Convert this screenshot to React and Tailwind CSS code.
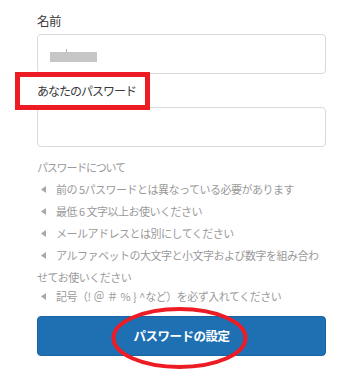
import React from "react";

const Bullet = () => (
  <svg width="5" height="7" viewBox="0 0 5 7" className="inline-block mr-[10px] ml-[4px] align-[1px]">
    <polygon points="5,0 5,7 0,3.5" fill="#a8a8a8" />
  </svg>
);

export default function App() {
  const font = { fontFamily: '"Noto Sans CJK JP", "Noto Sans", sans-serif' };
  return (
    <div className="relative w-[361px] h-[380px] bg-white overflow-hidden" style={font}>
      <div className="ml-[37px] w-[289px] pt-[11px] flex flex-col">
        <div className="h-[20px] leading-[20px] text-[12.5px] text-[#3a3a3a] font-normal tracking-[-0.5px]">名前</div>
        <div className="mt-[3px] h-[40px] border border-[#d9d9d9] rounded-[4px] relative">
          <div className="absolute left-[12px] top-[17px] w-[47px] h-[10px] bg-[#c6c6c6]" />
          <div className="absolute left-[28px] top-[14px] w-[1px] h-[3px] bg-[#b0b0b0]" />
        </div>
        <div className="mt-[7px] h-[20px] leading-[20px] text-[12px] text-[#3a3a3a] font-normal tracking-[-1px]">あなたのパスワード</div>
        <div className="mt-[6px] h-[40px] border border-[#d9d9d9] rounded-[4px]" />
        <div className="mt-[10px] h-[20px] leading-[20px] text-[11px] text-[#9a9a9a] tracking-[-1.2px]">パスワードについて</div>
        <ul className="mt-[1px] text-[11px] leading-[22px] text-[#9a9a9a] tracking-[-0.5px]">
          <li className="whitespace-nowrap"><Bullet />前の 5パスワードとは異なっている必要があります</li>
          <li className="whitespace-nowrap"><Bullet />最低 6 文字以上お使いください</li>
          <li className="whitespace-nowrap"><Bullet />メールアドレスとは別にしてください</li>
          <li className="whitespace-nowrap"><Bullet />アルファベットの大文字と小文字および数字を組み合わ<br />せてお使いください</li>
          <li className="whitespace-nowrap -mt-[3px]"><Bullet />記号（<span className="tracking-normal">! ＠ ＃ % } ^</span>など）を必ず入れてください</li>
        </ul>
        <button className="mt-[9px] h-[40px] w-full rounded-[4px] bg-[#1f6fb3] border border-[#1a63a3] text-white text-[12.5px] font-bold tracking-[-0.5px]">
          パスワードの設定
        </button>
      </div>
      <div className="absolute left-[15px] top-[72px] w-[135px] h-[38px] border-[5px] border-[#ed1c24]" />
      <svg className="absolute left-[110px] top-[306px]" width="139" height="64" viewBox="0 0 139 64">
        <ellipse cx="69.5" cy="32" rx="66" ry="29" fill="none" stroke="#ed1c24" strokeWidth="4" />
      </svg>
    </div>
  );
}
